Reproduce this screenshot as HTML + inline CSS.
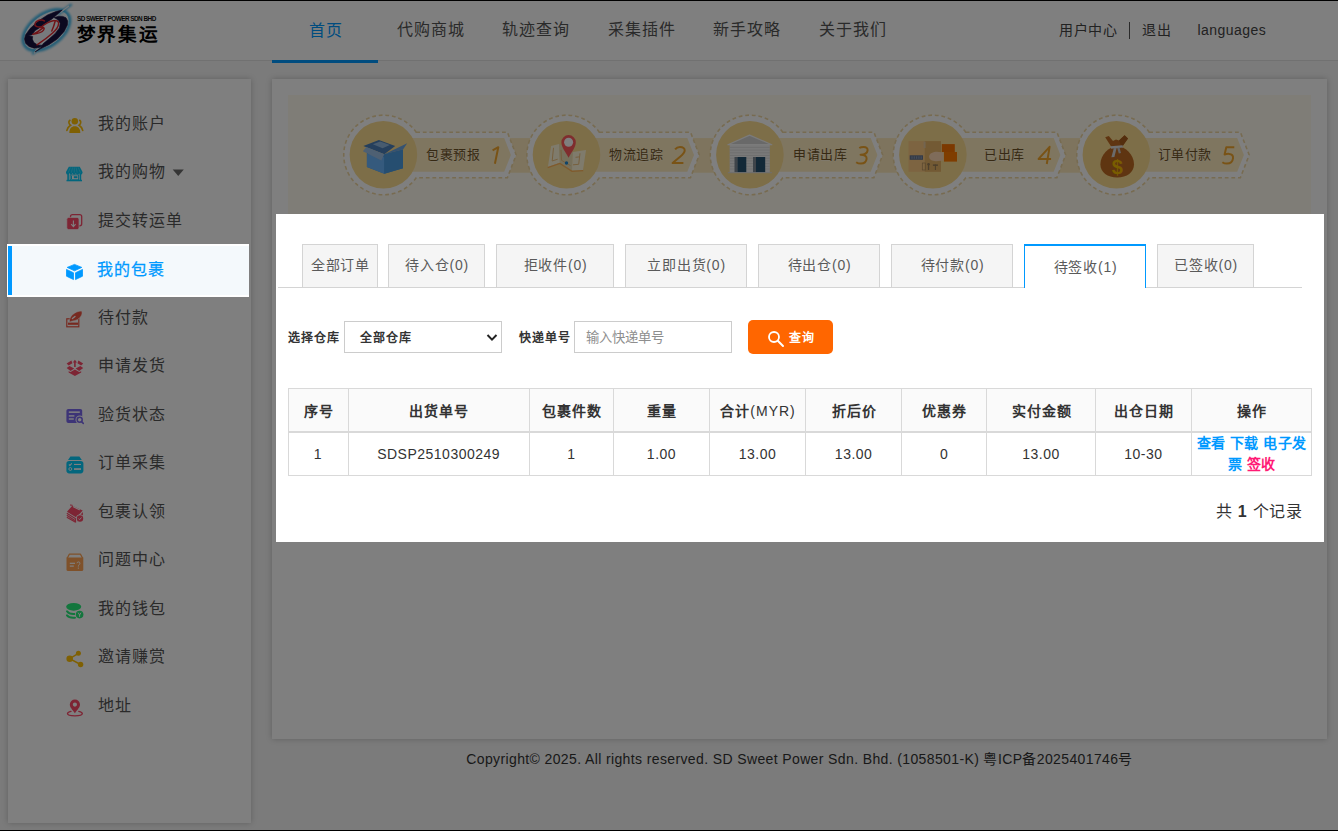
<!DOCTYPE html>
<html lang="zh-CN">
<head>
<meta charset="utf-8">
<title>我的包裹</title>
<style>
*{box-sizing:border-box;margin:0;padding:0}
html,body{width:1338px;height:831px;overflow:hidden}
body{font-family:"Liberation Sans",sans-serif;background:#f6f6f6;color:#333;position:relative;font-size:14px}
a{text-decoration:none;color:inherit}
.abs{position:absolute}
/* header */
#hdr{position:absolute;left:0;top:0;width:1338px;height:61px;background:#fff;border-bottom:1px solid #e2e2e2}
#logo{position:absolute;left:14px;top:0;width:64px;height:58px}
#brand1{position:absolute;left:77px;top:14.2px;font-size:6.4px;font-weight:bold;color:#111;letter-spacing:-0.52px;white-space:nowrap;line-height:9px;transform-origin:0 0}
#brand2{position:absolute;left:76.5px;top:22.4px;font-size:18.6px;font-weight:bold;color:#000;white-space:nowrap;line-height:26px;letter-spacing:1.8px}
.nav{position:absolute;top:0;height:60px;width:106px;text-align:center;line-height:60px;font-size:16px;color:#555;letter-spacing:1px;white-space:nowrap}
.nav.on{color:#0099ff;padding-left:1.5px;line-height:61px}
#navbar{position:absolute;left:272px;top:60px;width:106px;height:3px;background:#0099ff}
.ur{position:absolute;top:0;line-height:60px;font-size:14px;color:#444;white-space:nowrap;letter-spacing:0.6px}
/* sidebar */
#side{position:absolute;left:8px;top:79px;width:243px;height:744px;background:#fff;box-shadow:0 0 6px rgba(0,0,0,.22)}
.mi{position:absolute;left:0;width:241px;height:49px;line-height:48px;font-size:16px;color:#555;letter-spacing:0.9px;white-space:nowrap}
.mi span{position:absolute;left:90px;top:0}
/* main */
#main{position:absolute;left:272px;top:79px;width:1055px;height:660px;background:#fff;box-shadow:0 0 6px rgba(0,0,0,.22)}
#banner{position:absolute;left:288px;top:95px;width:1023.4px;height:130px;background:#fffaef;overflow:hidden}
.bl{position:absolute;top:145.1px;line-height:20px;font-size:12.9px;color:#6e5226;white-space:nowrap;letter-spacing:0.55px;margin-left:1px;text-shadow:0 1px 0 rgba(255,255,255,.4)}
.bn{position:absolute;top:138px;width:40px;text-align:center;line-height:34px;font-size:26px;font-style:italic;color:#f0a535;white-space:nowrap}
#ovl{position:absolute;left:0;top:0;width:1338px;height:831px;background:rgba(0,0,0,.5)}
#foot{position:absolute;left:272px;width:1055px;top:750px;text-align:center;font-size:14px;color:#333;line-height:18px;white-space:nowrap;letter-spacing:0.378px}
/* highlight layers */
#hl1{position:absolute;left:7px;top:244px;width:242px;height:53px;background:#fff}
#hl1 .mi{left:1px;top:2px;background:#f4f9fc;color:#0099ff;border-left:4px solid #0099ff}
#hl1 .mi span{left:85px;-webkit-text-stroke:0.25px #0099ff}
#hl2{position:absolute;left:276px;top:214px;width:1048px;height:328px;background:#fff}
.tab{position:absolute;top:244px;height:43px;border:1px solid #d4d4d4;border-bottom:none;background:#f5f5f5;color:#5a5a5a;font-size:14px;text-align:center;line-height:41px;white-space:nowrap;letter-spacing:0.8px;padding-left:1px}
.tab.on{background:#fff;border:1px solid #0099ff;border-top-width:2px;border-bottom:none;line-height:43px;color:#5a5a5a;height:44px}
#tabline{position:absolute;left:278px;top:287px;width:1024px;height:1px;background:#d4d4d4}
.lbl{position:absolute;font-size:12px;font-weight:bold;color:#333;line-height:16px;white-space:nowrap;letter-spacing:0.9px}
.box{position:absolute;top:321px;width:158px;height:32px;border:1px solid #ccc;background:#fff}
#btn{position:absolute;left:748px;top:320px;width:85px;height:34px;background:#ff6600;border-radius:5px;color:#fff;font-size:12px;font-weight:bold;line-height:34px}
table{position:absolute;left:287.5px;top:388px;width:1024px;border-collapse:collapse;table-layout:fixed;font-size:14px;color:#333}
th,td{border:1px solid #d9d9d9;text-align:center;vertical-align:middle;padding:0}
th{height:43px;background:#fafafa;font-weight:bold;border-bottom:2px solid #d9d9d9;letter-spacing:1px;padding:0 0 0 1px}
td{height:43px;line-height:21px;letter-spacing:0.5px;border-top:none;position:relative;top:0.8px}
td a{color:#0099ff;font-weight:bold}
td a.pk{color:#ff1a75}
#cnt{position:absolute;left:1100px;width:1202px;top:500px;font-size:16px;color:#333}
.bar{position:absolute;left:0;width:1338px;background:#000}
</style>
</head>
<body>
<!-- HEADER -->
<div id="hdr">
  <svg id="logo" viewBox="0 0 64 58">
<defs><filter id="gl" x="-30%" y="-30%" width="160%" height="160%"><feGaussianBlur stdDeviation="1.1"/></filter></defs>
<g transform="rotate(-37 32.2 29.4)">
<ellipse cx="32" cy="30" rx="26.6" ry="15.6" fill="none" stroke="#35b4ea" stroke-width="3.2" filter="url(#gl)"/>
<ellipse cx="32" cy="30" rx="25.4" ry="14.6" fill="#eef5fa"/>
</g>
<path d="M45 13.6 L57 4.8 M26 46 L19 53.6" stroke="#35b4ea" stroke-width="2.6" stroke-linecap="round" filter="url(#gl)" opacity=".8"/>
<path d="M47 12 L54.5 6.2 M24 48 L20.4 52.8" stroke="#f1f4f8" stroke-width="1.3" stroke-linecap="round"/>
<polygon points="48.2,10.1 41.9,11.5 33.5,15.0 24.4,20.9 16.1,28.6 11.5,34.9 10.5,39.1 11.5,43.3 15.0,46.4 20.2,48.2 25.1,47.5 28.6,45.4 23.7,45.0 19.9,42.6 18.3,39.1 18.7,36.6 14.3,35.7 18.3,34.7 20.9,30.7 26.5,27.2 31.4,23.4 37.7,19.2 42.6,15.0 46.1,11.9" fill="#17103f" stroke="#17103f" stroke-width="0.6" stroke-linejoin="round"/>
<polygon points="20.9,52.0 26.5,48.8 34.9,44.7 43.3,39.1 50.2,31.4 53.4,25.1 53.7,20.9 52.0,17.8 48.8,16.4 44.7,16.2 40.1,17.6 44.3,19.9 46.2,23.4 45.4,27.9 41.2,33.5 34.9,39.1 29.3,43.6 26.2,48.2" fill="#17103f" stroke="#17103f" stroke-width="0.6" stroke-linejoin="round"/>
<g fill="none" stroke="#e2262e" stroke-width="1.45" stroke-linecap="round" stroke-linejoin="round">
<path d="M30.4 20.9 C27.6 18.8 22 20.4 21 23.6 C20.3 26.2 23.4 27.2 26.4 27 C29.8 26.8 31.2 28.2 29.4 30.4 C27.4 32.8 22.8 33.8 18.8 34.3 C23 32.4 26 30.4 29.4 27.6"/>
<path d="M26.4 27.6 C30 24.8 34.6 21.6 39.2 20.8 C42.6 20.2 44.8 21 44.6 23.6 C44.4 26.6 42.4 29.6 38.6 33 C34 37.2 28.6 41.2 23 44.8"/>
<path d="M41.2 21 C40.4 24.4 39.2 27.8 37.8 31"/>
</g>
</svg>
  <div id="brand1">SD SWEET POWER SDN BHD</div>
  <div id="brand2">梦界集运</div>
  <div class="nav on" style="left:272px">首页</div>
  <div class="nav" style="left:378px">代购商城</div>
  <div class="nav" style="left:483px">轨迹查询</div>
  <div class="nav" style="left:589px">采集插件</div>
  <div class="nav" style="left:694px">新手攻略</div>
  <div class="nav" style="left:800px">关于我们</div>
  <div class="ur" style="left:1059px">用户中心</div>
  <div class="abs" style="left:1129px;top:22px;width:1px;height:17px;background:#555"></div>
  <div class="ur" style="left:1142px">退出</div>
  <div class="ur" style="left:1197.5px;letter-spacing:0.45px">languages</div>
</div>
<div id="navbar"></div>

<!-- SIDEBAR -->
<div id="side">
  <div class="mi" style="top:20.75px"><span>我的账户</span></div>
  <div class="mi" style="top:69.25px"><span>我的购物</span></div>
  <div class="mi" style="top:117.75px"><span>提交转运单</span></div>
  <div class="mi" style="top:214.75px"><span>待付款</span></div>
  <div class="mi" style="top:263.25px"><span>申请发货</span></div>
  <div class="mi" style="top:311.75px"><span>验货状态</span></div>
  <div class="mi" style="top:360.25px"><span>订单采集</span></div>
  <div class="mi" style="top:408.75px"><span>包裹认领</span></div>
  <div class="mi" style="top:457.25px"><span>问题中心</span></div>
  <div class="mi" style="top:505.75px"><span>我的钱包</span></div>
  <div class="mi" style="top:554.25px"><span>邀请赚赏</span></div>
  <div class="mi" style="top:602.75px"><span>地址</span></div>
</div>


<svg id="sicons" class="abs" style="left:0;top:0" width="260" height="831" viewBox="0 0 260 831">
<!-- 1 users -->
<g fill="#ffc107"><circle cx="74.8" cy="121.2" r="3.25"/><path d="M69.3 133.1 C69.3 128.6 71.4 126.3 74.8 126.3 C78.2 126.3 80.3 128.6 80.3 133.1 Z"/></g>
<g fill="none" stroke="#ffc107" stroke-width="1.7" stroke-linecap="round"><path d="M69.9 120.3 C68 121.7 69 124.2 70.5 125.2 C68.6 126.4 67.4 128.2 66.9 130.4"/><path d="M79.7 120.3 C81.6 121.7 80.6 124.2 79.1 125.2 C81 126.4 82.2 128.2 82.7 130.4"/></g>
<!-- 2 shop -->
<g fill="#06ccfa"><path d="M68.8 166.8 H79.8 L82.4 171.8 V173 H66.1 V171.8 Z"/>
<circle cx="67.7" cy="173" r="1.6"/><circle cx="70.95" cy="173" r="1.6"/><circle cx="74.25" cy="173" r="1.6"/><circle cx="77.55" cy="173" r="1.6"/><circle cx="80.8" cy="173" r="1.6"/>
<rect x="67.3" y="173" width="1.6" height="7"/><rect x="79.6" y="173" width="1.6" height="7"/><rect x="66.5" y="179.8" width="15.5" height="1.5"/>
<rect x="70.9" y="175.6" width="1.1" height="3.4"/><rect x="73.8" y="176.2" width="3.6" height="2"/></g>
<rect x="70.1" y="174.9" width="8.5" height="4.9" fill="none" stroke="#06ccfa" stroke-width="0.9"/>
<g stroke="#fff" stroke-width="0.5" opacity=".45"><path d="M70.4 167.4 L68.2 172.6 M72.6 167.4 L71.4 172.6 M74.3 167.4 V172.6 M76 167.4 L77.2 172.6 M78.2 167.4 L80.4 172.6"/></g>
<polygon points="172.7,169.6 183.8,169.6 178.25,176" fill="#6a6a6a"/>
<!-- 3 transfer -->
<rect x="70.5" y="214.6" width="11.2" height="11.2" rx="2" fill="none" stroke="#fb4a69" stroke-width="1.3"/>
<rect x="66.8" y="217.4" width="12.2" height="12.2" rx="1.8" fill="#fb4a69" stroke="#fff" stroke-width="0.7"/>
<path d="M73.4 220.6 V226 M71.2 224.2 L73.4 226.6 L75.6 224.2" fill="none" stroke="#fff" stroke-width="1.1"/>
<!-- 5 pay -->
<rect x="66.8" y="318.8" width="12" height="8" fill="none" stroke="#ee5340" stroke-width="1.2"/>
<rect x="68" y="322.6" width="10" height="2.2" fill="#ee5340"/>
<path d="M69.3 321.8 C69.4 316 74.5 311.4 81.6 310.9 C83.2 313.6 80.6 318.6 76 320.2 C73.6 321 71.6 321 70.6 321.8 Z" fill="#ee5340" stroke="#fff" stroke-width="0.6"/>
<path d="M72.4 318.6 L75 316.5" stroke="#fff" stroke-width="1.3" stroke-linecap="round"/>
<!-- 6 ship -->
<g fill="#fb4a69"><polygon points="66.6,363.4 71.4,360.5 72.4,363.2 68.7,365.5"/><polygon points="83.2,363.4 78.4,360.5 77.4,363.2 81.1,365.5"/>
<polygon points="66.6,367.9 69.5,365.9 74.2,368.6 70.6,370.9"/><polygon points="83.2,367.9 80.3,365.9 75.6,368.6 79.2,370.9"/>
<polygon points="68.6,371.3 70.6,371.9 74.9,369.6 79.2,371.9 81.2,371.3 81.2,372.5 74.9,376.1 68.6,372.5"/>
<polygon points="74.9,359.7 77,362.6 75.7,362.6 75.7,367 74.1,367 74.1,362.6 72.8,362.6"/></g>
<!-- 7 inspect -->
<rect x="66.4" y="408.9" width="15.8" height="14.1" rx="1.9" fill="#7b68ee"/>
<g fill="#fff"><rect x="68.8" y="411.4" width="11" height="1.5"/><rect x="68.8" y="415.2" width="5.6" height="1.4"/><rect x="68.8" y="418.3" width="5" height="1.4"/></g>
<circle cx="79.7" cy="419.8" r="4.2" fill="#fff"/><path d="M81.5 421.6 L84.5 424.6" stroke="#fff" stroke-width="3"/>
<circle cx="79.7" cy="419.8" r="2.5" fill="none" stroke="#7b68ee" stroke-width="1.5"/><path d="M81.5 421.6 L83.3 423.4" stroke="#7b68ee" stroke-width="1.5" stroke-linecap="round"/>
<!-- 8 collect -->
<g fill="#06ccfa"><path d="M70.4 456.5 H79.4 L81.8 459.9 H68 Z"/><rect x="66.4" y="461" width="17" height="12.4" rx="2.8"/></g>
<g fill="none" stroke="#fff"><path d="M68.9 464.5 L69.9 465.5 L71.8 463.3" stroke-width="1.1"/><circle cx="70.3" cy="469" r="1.45" stroke-width="0.9"/></g>
<g fill="#fff"><rect x="74" y="463.9" width="7" height="1.1"/><rect x="74" y="468.2" width="7" height="1.7"/></g>
<!-- 9 claim -->
<g fill="#fb4a69"><polygon points="67,511.7 72.3,505.7 82.7,510.6 76.3,517.4"/><polygon points="77,518.4 82.9,512 82.9,516.4 79,521.5 77,521.5"/>
<path d="M70 505 L72.6 505.3" stroke="#fb4a69" stroke-width="1"/></g>
<g stroke="#fb4a69" stroke-width="1.15" fill="none"><path d="M66.8 513.3 L75.6 518.8 M66.8 515.3 L75 520.4 M66.8 517.2 L75.6 522.2 M75.6 518.4 V522.4"/></g>
<path d="M73.4 506.7 L79.4 509.8" stroke="#fff" stroke-width="1.1" stroke-linecap="round"/>
<circle cx="80" cy="518.5" r="4" fill="#fff"/><circle cx="80" cy="518.5" r="3.2" fill="#fb4a69"/>
<path d="M78.5 518.6 L79.6 519.7 L81.5 517.5" fill="none" stroke="#fff" stroke-width="0.9"/>
<!-- 10 question -->
<path d="M67.2 558.2 L69.3 554.2 H80.5 L82.6 558.2" fill="none" stroke="#ffa354" stroke-width="1.3" stroke-linejoin="round"/>
<path d="M66.5 557.6 H83.3 V569.4 Q83.3 571 81.7 571 H68.1 Q66.5 571 66.5 569.4 Z" fill="#ffa354"/>
<g fill="#fff"><rect x="69.8" y="562.7" width="5.2" height="1.2"/><rect x="69.8" y="565.5" width="4" height="1.2"/><rect x="77.8" y="567.6" width="1.1" height="1.1"/></g>
<path d="M77 563.2 Q77.2 561.9 78.5 561.9 Q79.9 561.9 79.9 563.3 Q79.9 564.2 79 564.8 Q78.35 565.3 78.35 566.6" fill="none" stroke="#fff" stroke-width="0.95"/>
<!-- 11 wallet -->
<ellipse cx="73.7" cy="606.8" rx="7.5" ry="3.9" fill="#26ec7a"/>
<g fill="none" stroke="#26ec7a" stroke-width="2" stroke-linecap="round"><path d="M67 611.3 C68.6 613.6 72 614.2 74.6 614"/><path d="M67 615.4 C68.6 617.5 72 618 75 617.7"/></g>
<circle cx="79.6" cy="614.6" r="4.5" fill="#fff"/><circle cx="79.6" cy="614.6" r="3.8" fill="#26ec7a"/>
<path d="M78.2 612.7 L79.6 615 L81 612.7 M79.6 615 V616.9" fill="none" stroke="#fff" stroke-width="1"/>
<!-- 12 share -->
<g fill="#ffc107"><circle cx="69.7" cy="658.7" r="3.3"/><circle cx="78.4" cy="653.3" r="2.5"/><circle cx="80.6" cy="664.5" r="2.7"/></g>
<path d="M78.4 653.3 L69.7 658.7 L80.6 664.5" fill="none" stroke="#ffc107" stroke-width="1.5"/>
<!-- 13 address -->
<path fill-rule="evenodd" fill="#fb4a69" d="M74.9 713.2 C72 709.2 69.8 707.2 69.8 704.5 A5.1 5.1 0 1 1 80 704.5 C80 707.2 77.8 709.2 74.9 713.2 Z M74.9 702.5 A2.1 2.1 0 1 0 74.9 706.7 A2.1 2.1 0 1 0 74.9 702.5 Z"/>
<path d="M71 711.4 C68.6 711.9 67.5 712.7 67.5 713.6 C67.5 715 70.8 715.9 74.9 715.9 C79 715.9 82.3 715 82.3 713.6 C82.3 712.7 81.2 711.9 78.8 711.4" fill="none" stroke="#fb4a69" stroke-width="1.4" stroke-linecap="round"/>
</svg>

<!-- MAIN -->
<div id="main"></div>
<div id="banner"></div>
<svg id="bsvg" class="abs" style="left:288px;top:95px" width="1023.4" height="130" viewBox="288 95 1023.4 130">
<rect x="288" y="95" width="1024" height="130" fill="#fffaef"/>
<rect x="508.4" y="138.1" width="58.1" height="34.6" fill="#fde9bc"/>
<rect x="691.5" y="138.1" width="58.4" height="34.6" fill="#fde9bc"/>
<rect x="874.9" y="138.1" width="58.0" height="34.6" fill="#fde9bc"/>
<rect x="1057.9" y="138.1" width="58.5" height="34.6" fill="#fde9bc"/>
<g transform="translate(383.4 154.8)">
<path d="M32.8 -22.6 H124 L132.8 0.1 L124 22.9 H32.8 A39.8 39.8 0 1 1 32.8 -22.6 Z" fill="#fff" stroke="#efd7a2" stroke-width="1.6" stroke-dasharray="3.8 2.8"/>
<polygon points="0,-16.8 120.8,-16.8 127.5,0.1 120.8,17 0,17" fill="#ffecc0"/>
<circle r="33.8" fill="#fbdc90"/>
<polygon points="-20.1,-8.9 -4.5,-14.7 11.8,-8.9 0.9,-0.5" fill="#4a7fb8"/>
<polygon points="-10.5,-10.6 -3.2,-13.2 6.5,-9.8 -0.8,-6.6" fill="#8fb6de"/>
<polygon points="-16.5,-3 0.9,-0.5 19.6,-5.3 19.6,13.4 0.9,19 -16.5,12.2" fill="#4c9ce0"/><polygon points="-16.5,-1 0.9,2.5 0.9,19 -16.5,12.2" fill="#6ab4fa"/>
<polygon points="0.9,-0.5 19.6,-5.3 19.6,13.4 0.9,19" fill="#4c9ce0"/>
<polygon points="-20.5,-3.5 -17.1,-7.7 0.9,-0.5 -2.1,5.8" fill="#9cc0e6"/>
<polygon points="0.9,-0.5 23.8,-11.5 19.6,-5.3" fill="#6aa5e2"/>
</g>
<g transform="translate(566.5 154.8)">
<path d="M32.8 -22.6 H124 L132.8 0.1 L124 22.9 H32.8 A39.8 39.8 0 1 1 32.8 -22.6 Z" fill="#fff" stroke="#efd7a2" stroke-width="1.6" stroke-dasharray="3.8 2.8"/>
<polygon points="0,-16.8 120.8,-16.8 127.5,0.1 120.8,17 0,17" fill="#ffecc0"/>
<circle r="33.8" fill="#fbdc90"/>
<polygon points="-15.4,-8.9 -7.5,-10.7 -6.6,8 -18.6,12.2" fill="#fff6d8"/>
<polygon points="-7.5,-10.7 6.3,-2.9 5.5,15.8 -6.6,8" fill="#ece0b6"/>
<polygon points="6.3,-2.9 19.5,-4.7 16.5,15.2 5.5,15.8" fill="#fff6d8"/>
<polyline points="-18.8,12.9 -6.6,8.7 5.5,16.5 16.7,15.9" fill="none" stroke="#ffb45a" stroke-width="1.3"/>
<path d="M-13 -7 L-14.3 6.2 L-8.8 4.4 M-5.5 -5 L-5 5.5 L4 10.8 M9 2.5 L13.5 2 M13.5 -1.5 L12.2 9.5 L6.5 10" fill="none" stroke="#eec07a" stroke-width="1"/>
<path d="M2.1 3 C-1 -3 -5.1 -7.5 -5.1 -12.5 A7.2 7.2 0 1 1 9.3 -12.5 C9.3 -7.5 5.2 -3 2.1 3 Z" fill="#ff5a5c"/>
<circle cx="2.1" cy="-12.6" r="4.5" fill="#ffffff"/><circle cx="0" cy="8.2" r="1.7" fill="#1e88d2"/>
</g>
<g transform="translate(749.9 154.8)">
<path d="M32.8 -22.6 H124 L132.8 0.1 L124 22.9 H32.8 A39.8 39.8 0 1 1 32.8 -22.6 Z" fill="#fff" stroke="#efd7a2" stroke-width="1.6" stroke-dasharray="3.8 2.8"/>
<polygon points="0,-16.8 120.8,-16.8 127.5,0.1 120.8,17 0,17" fill="#ffecc0"/>
<circle r="33.8" fill="#fbdc90"/>
<rect x="-20.2" y="-10.1" width="40.1" height="28" fill="#f2f2f2"/>
<g stroke="#d9d9d9" stroke-width="0.8"><path d="M-20.2 -7.4 H19.9 M-20.2 -4.7 H19.9 M-20.2 -2 H19.9 M-20.2 0.7 H19.9 M-20.2 3.4 H19.9 M-20.2 6.1 H19.9 M-20.2 8.8 H19.9 M-20.2 11.5 H19.9 M-20.2 14.2 H19.9"/></g>
<polygon points="-0.3,-19.7 21.9,-10.1 -22,-10.1" fill="#d2d2d2" stroke="#f6f6f6" stroke-width="1.2" stroke-linejoin="round"/>
<rect x="-15.4" y="2.2" width="3.2" height="15.4" fill="#7d8894"/><rect x="3.1" y="2.2" width="3.2" height="15.4" fill="#7d8894"/>
<rect x="-12.4" y="2.2" width="8.8" height="15.4" fill="#25506f"/><rect x="6.1" y="2.2" width="9.2" height="15.4" fill="#25506f"/>
<rect x="-22" y="17.4" width="44" height="1" fill="#dedede"/>
</g>
<g transform="translate(932.9 154.8)">
<path d="M32.8 -22.6 H124 L132.8 0.1 L124 22.9 H32.8 A39.8 39.8 0 1 1 32.8 -22.6 Z" fill="#fff" stroke="#efd7a2" stroke-width="1.6" stroke-dasharray="3.8 2.8"/>
<polygon points="0,-16.8 120.8,-16.8 127.5,0.1 120.8,17 0,17" fill="#ffecc0"/>
<circle r="33.8" fill="#fbdc90"/>
<rect x="-24.4" y="-13.7" width="16.4" height="30.7" fill="#fbc982"/><rect x="-8.2" y="-13.7" width="16.3" height="30.7" fill="#e6b468"/>
<rect x="-9.3" y="-13.2" width="2" height="6.5" fill="#e6caa0"/>
<rect x="-23.2" y="0.5" width="13.3" height="4.5" fill="#66748e"/>
<g fill="#8e9ab0"><rect x="-21.5" y="1.5" width="1.2" height="2.5"/><rect x="-19.2" y="1.5" width="1.2" height="2.5"/><rect x="-16.9" y="1.5" width="1.2" height="2.5"/><rect x="-14.6" y="1.5" width="1.2" height="2.5"/><rect x="-12.3" y="1.5" width="1.2" height="2.5"/></g>
<rect x="8.9" y="-10.7" width="13" height="7.9" fill="#f87200"/><rect x="11.1" y="-2.8" width="13" height="9.6" fill="#ff7a00"/>
<path d="M-3.8 1.8 C-3.8 -1.5 0.5 -3 4 -3 L10.5 -2.2 V5.8 L3 6.4 C-1 6.4 -3.8 5 -3.8 1.8 Z" fill="#ffd8b4"/>
<g fill="#9a7f58"><rect x="-5" y="8.4" width="1.3" height="6.8"/><rect x="-5.6" y="8.2" width="2.5" height="2.5" rx="1.2"/><rect x="0" y="9.6" width="5" height="1.5"/><rect x="2" y="9.6" width="1" height="5.6"/></g>
<rect x="-10.6" y="8.2" width="3" height="7" fill="none" stroke="#b08d5c" stroke-width="0.7"/>
</g>
<g transform="translate(1116.4 154.8)">
<path d="M32.8 -22.6 H124 L132.8 0.1 L124 22.9 H32.8 A39.8 39.8 0 1 1 32.8 -22.6 Z" fill="#fff" stroke="#efd7a2" stroke-width="1.6" stroke-dasharray="3.8 2.8"/>
<polygon points="0,-16.8 120.8,-16.8 127.5,0.1 120.8,17 0,17" fill="#ffecc0"/>
<circle r="33.8" fill="#fbdc90"/>
<polygon points="-11.2,-17.6 -7.6,-18.9 -3.4,-13.8 -0.4,-15.2 2.6,-14.2 8.2,-19.6 11.6,-16.4 5.4,-7.5 -4.8,-7.5" fill="#be6a22"/>
<polygon points="8.2,-19.6 11.6,-16.4 5.4,-7.5 2.6,-14.2" fill="#a85c1c"/>
<path d="M0.8 -8.6 C9 -8.6 17.6 0 17.6 9.4 C17.6 17.6 10.4 22.6 0.8 22.6 C-8.8 22.6 -16 17.6 -16 9.4 C-16 0 -7.4 -8.6 0.8 -8.6 Z" fill="#be6a22"/>

<polygon points="-6,-8.6 6.2,-9.6 6.6,-7.2 -5.4,-6" fill="#dedede"/>
<polygon points="-2.6,-6.6 0.2,-6.9 -2,2.2 -5,2.4" fill="#d6d6d6"/><polygon points="0.8,-6.9 3.2,-7.1 4.6,-1.8 2.4,-1.2" fill="#c4c4c4"/>
<text x="1" y="18.9" text-anchor="middle" font-family="'Liberation Sans',sans-serif" font-weight="bold" font-size="21" fill="#f2ba00" transform="translate(0.05 0) scale(0.95 1)">$</text>
</g>
<g fill="none" stroke="#f3a72c" stroke-width="2" stroke-linejoin="round">
<path d="M492.6 150.3 L498.3 147.2 L494.9 163.8"/>
<path d="M675.1 149.3 C676.4 147.6 678.2 146.9 680 146.9 C683 146.9 684.9 148.4 684.7 150.6 C684.5 152.8 682.6 154.6 680.4 156.4 L672.6 163.1 H683.4"/>
<path d="M859.3 148 C860.4 147.2 862 146.9 863.6 146.9 C866.4 146.9 867.9 148.4 867.6 150.5 C867.2 153 864.8 154.7 860.6 154.8 C865 154.8 866.9 156.4 866.6 158.9 C866.2 161.8 863.8 163.6 861 163.6 C859 163.6 857.4 163.1 856.2 162.2"/>
<path d="M1046.8 164 L1049.6 146.8 L1038.6 158.9 H1051.1"/>
<path d="M1234.3 147.3 H1226.3 L1224.6 154.6 C1226 154 1227.6 153.8 1229.2 153.9 C1232 154.1 1233.4 155.8 1233 158.4 C1232.6 161.6 1230.2 163.6 1227 163.6 C1225 163.6 1223.6 163.1 1222.4 162.2"/>
</g>
</svg>
<div class="bl" style="left:425.2px">包裹预报</div>
<div class="bl" style="left:608.4px">物流追踪</div>
<div class="bl" style="left:792.2px">申请出库</div>
<div class="bl" style="left:983.1px">已出库</div>
<div class="bl" style="left:1156.8px">订单付款</div>
<div id="foot">Copyright© 2025. All rights reserved. SD Sweet Power Sdn. Bhd. (1058501-K) 粤ICP备2025401746号</div>

<!-- OVERLAY -->
<div id="ovl"></div>

<!-- HIGHLIGHT 1 -->
<div id="hl1"><div class="mi"><span>我的包裹</span></div><svg class="abs" style="left:0;top:0;width:242px;height:53px" viewBox="7 244 242 53"><g fill="#0099ff" stroke="#0099ff" stroke-width="0.8" stroke-linejoin="round"><polygon points="74.5,264.4 81.8,267.4 74.5,270.8 67.2,267.4"/><polygon points="66.5,269.4 73.5,272.8 73.5,279.6 66.5,276.2"/><polygon points="75.5,272.8 82.5,269.4 82.5,276.2 75.5,279.6"/></g></svg></div>

<!-- HIGHLIGHT 2 -->
<div id="hl2"></div>
<div id="tabline"></div>
<div class="tab" style="left:302px;width:76px">全部订单</div>
<div class="tab" style="left:388px;width:97px">待入仓(0)</div>
<div class="tab" style="left:496px;width:118px">拒收件(0)</div>
<div class="tab" style="left:625px;width:122px">立即出货(0)</div>
<div class="tab" style="left:758px;width:122px">待出仓(0)</div>
<div class="tab" style="left:891px;width:122px">待付款(0)</div>
<div class="tab on" style="left:1024px;width:122px">待签收(1)</div>
<div class="tab" style="left:1157px;width:97px">已签收(0)</div>

<div class="lbl" style="left:288px;top:330px">选择仓库</div>
<div class="box" style="left:344px"><div class="lbl" style="left:15px;top:8px">全部仓库</div>
  <svg class="abs" style="left:141px;top:11px" width="12" height="9" viewBox="0 0 12 9"><path d="M1.5 2 L6 6.6 L10.5 2" fill="none" stroke="#222" stroke-width="2"/></svg></div>
<div class="lbl" style="left:519px;top:330px">快递单号</div>
<div class="box" style="left:574px"><div class="abs" style="left:11px;top:6.8px;font-size:13.33px;color:#8e8e8e;line-height:18px;white-space:nowrap">输入快递单号</div></div>
<div id="btn"><svg class="abs" style="left:19px;top:10px" width="18" height="18" viewBox="0 0 18 18"><circle cx="7" cy="7" r="5" fill="none" stroke="#fff" stroke-width="1.8"/><path d="M10.8 10.8 L16 16" stroke="#fff" stroke-width="2" stroke-linecap="round"/></svg><span class="abs" style="left:41px;top:1px;letter-spacing:0.5px">查询</span></div>

<table>
<colgroup><col style="width:60px"><col style="width:181.3px"><col style="width:84.3px"><col style="width:95.8px"><col style="width:96.3px"><col style="width:95.9px"><col style="width:84.9px"><col style="width:109.1px"><col style="width:95.8px"><col style="width:120.6px"></colgroup>
<tr><th>序号</th><th>出货单号</th><th>包裹件数</th><th>重量</th><th>合计<span style="font-weight:normal">(MYR)</span></th><th>折后价</th><th>优惠券</th><th>实付金额</th><th>出仓日期</th><th>操作</th></tr>
<tr><td>1</td><td>SDSP2510300249</td><td>1</td><td>1.00</td><td>13.00</td><td>13.00</td><td>0</td><td>13.00</td><td>10-30</td><td><a>查看</a> <a>下载</a> <a>电子发票</a> <a class="pk">签收</a></td></tr>
</table>
<div id="cnt" style="left:1102px;width:200px;text-align:right;line-height:22px;top:501px;letter-spacing:0.7px;margin-left:0.7px">共 <b>1</b> 个记录</div>

<div class="bar" style="top:0;height:1px"></div>
<div class="bar" style="top:830px;height:1px"></div>
</body>
</html>
